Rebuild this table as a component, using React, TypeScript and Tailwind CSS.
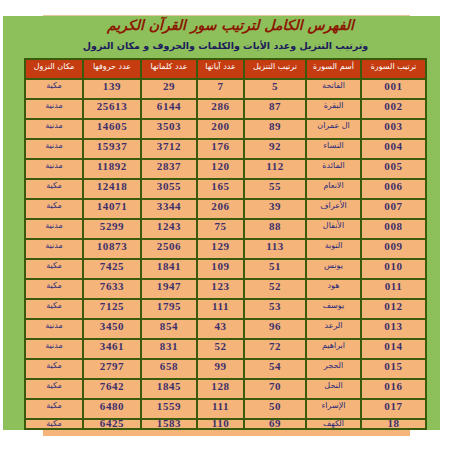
const HEADERS = [
  "ترتيب السورة",
  "أسم السورة",
  "ترتيب التنزيل",
  "عدد آياتها",
  "عدد كلماتها",
  "عدد حروفها",
  "مكان النزول",
];

// order: number, name, revelation order, verses, words, letters, place
const ROWS: [string, string, string, string, string, string, string][] = [
  ["001", "الفاتحة", "5", "7", "29", "139", "مكية"],
  ["002", "البقرة", "87", "286", "6144", "25613", "مدنية"],
  ["003", "ال عمران", "89", "200", "3503", "14605", "مدنية"],
  ["004", "النساء", "92", "176", "3712", "15937", "مدنية"],
  ["005", "المائدة", "112", "120", "2837", "11892", "مدنية"],
  ["006", "الانعام", "55", "165", "3055", "12418", "مكية"],
  ["007", "الأعراف", "39", "206", "3344", "14071", "مكية"],
  ["008", "الأنفال", "88", "75", "1243", "5299", "مدنية"],
  ["009", "التوبة", "113", "129", "2506", "10873", "مدنية"],
  ["010", "يونس", "51", "109", "1841", "7425", "مكية"],
  ["011", "هود", "52", "123", "1947", "7633", "مكية"],
  ["012", "يوسف", "53", "111", "1795", "7125", "مكية"],
  ["013", "الرعد", "96", "43", "854", "3450", "مدنية"],
  ["014", "ابراهيم", "72", "52", "831", "3461", "مدنية"],
  ["015", "الحجر", "54", "99", "658", "2797", "مكية"],
  ["016", "النحل", "70", "128", "1845", "7642", "مكية"],
  ["017", "الإسراء", "50", "111", "1559", "6480", "مكية"],
  ["18", "الكهف", "69", "110", "1583", "6425", "مكية"],
];

const arabic = "font-['DejaVu_Sans',sans-serif]";
const serif = "font-['Liberation_Serif',serif]";

function Cell({ text, kind, last }: { text: string; kind: "num" | "name"; last: boolean }) {
  return (
    <div
      className={`flex justify-center overflow-visible bg-[#f5b47a] leading-none ${
        last ? "h-[8px] items-center" : "h-[18px] items-start pt-[2px]"
      }`}
    >
      {kind === "num" ? (
        <span
          className={`${serif} inline-block scale-y-[0.85] text-[11px] font-bold tracking-[0.6px] text-[#3d2f6b]`}
        >
          {text}
        </span>
      ) : (
        <span className={`${arabic} text-[8px] text-[#2a2a7a]`}>{text}</span>
      )}
    </div>
  );
}

export default function App() {
  return (
    <div className="h-[452px] w-[452px] overflow-hidden bg-white">
      <div className="ml-[43px] mt-[15px] h-[1px] w-[367px] bg-[#e8c49a]" />
      <div className="ml-[3px] flex h-[414px] w-[437px] flex-col overflow-hidden bg-[#8dbf5b]">
        <div
          dir="rtl"
          className={`${arabic} mt-[0px] h-[18px] pl-[18px] text-center text-[14px] font-bold italic leading-[18px] text-[#8b1800]`}
        >
          الفهرس الكامل لترتيب سور القرآن الكريم
        </div>
        <div
          dir="rtl"
          className={`${arabic} mt-[4px] h-[16px] pl-[8px] text-center text-[9.5px] font-bold leading-[16px] text-[#1c1c5c]`}
        >
          وترتيب التنزيل وعدد الأيات والكلمات والحروف و مكان النزول
        </div>
        <div
          dir="rtl"
          className="ml-[21px] mt-[4px] grid w-[403px] grid-cols-[63px_53px_60px_45px_54px_56px_56px] gap-[2px] bg-[#3a5a0c] p-[2px]"
        >
          {HEADERS.map((h) => (
            <div
              key={h}
              className={`${arabic} flex h-[18px] items-start justify-center bg-[#c43c10] pt-[3px] text-[8px] leading-none text-white`}
            >
              {h}
            </div>
          ))}
          {ROWS.map((row, ri) =>
            row.map((v, ci) => (
              <Cell
                key={`${ri}-${ci}`}
                text={v}
                kind={ci === 1 || ci === 6 ? "name" : "num"}
                last={ri === ROWS.length - 1}
              />
            )),
          )}
        </div>
      </div>
      <div className="ml-[43px] h-[6px] w-[367px] bg-[#f5b47a]" />
    </div>
  );
}
